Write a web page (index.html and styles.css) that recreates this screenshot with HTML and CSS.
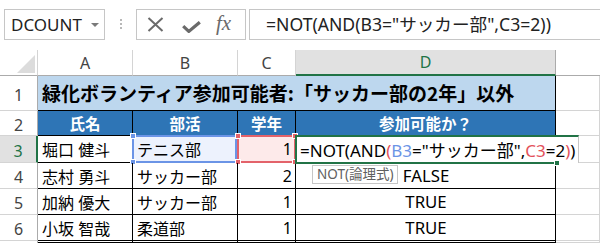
FILE: index.html
```html
<!DOCTYPE html>
<html lang="ja">
<head>
<meta charset="utf-8">
<link rel="stylesheet" href="styles.css">
</head>
<body>
<div class="toolbar">
  <div class="namebox"><span>DCOUNT</span><span class="caret"></span></div>
  <div class="grip"><i></i><i></i><i></i></div>
  <div class="fxbox">
    <svg class="ic-x" width="17" height="15" viewBox="0 0 17 15"><path d="M1.5 1 L15.5 14 M15.5 1 L1.5 14" stroke="#6a6a6a" stroke-width="2" fill="none"/></svg>
    <svg class="ic-ck" width="19" height="12" viewBox="0 0 19 12"><path d="M1.2 5.2 L6.8 10.4 L17.8 1.2" stroke="#6a6a6a" stroke-width="3.2" fill="none"/></svg>
    <span class="fx">fx</span>
  </div>
  <div class="formula">=NOT(AND(B3="サッカー部",C3=2))</div>
</div>

<div class="sheet">
  <div class="corner"><svg width="38" height="26" viewBox="0 0 38 26"><polygon points="35,5 35,23 17,23" fill="#dcdcdc"/></svg></div>
  <div class="ch">A</div>
  <div class="ch">B</div>
  <div class="ch">C</div>
  <div class="ch ch-act">D</div>
  <div class="ch ch-end"></div>

  <div class="rh">1</div>
  <div class="title">緑化ボランティア参加可能者:「サッカー部の2年」以外</div>
  <div class="g"></div>

  <div class="rh">2</div>
  <div class="hd">氏名</div>
  <div class="hd">部活</div>
  <div class="hd">学年</div>
  <div class="hd">参加可能か？</div>
  <div class="g"></div>

  <div class="rh rh-act">3</div>
  <div class="c">堀口 健斗</div>
  <div class="c c-blue">テニス部<div class="ref ref-blue"><i class="hdl tl"></i><i class="hdl bl"></i></div></div>
  <div class="c c-red num">1<div class="ref ref-red"><i class="hdl tl"></i><i class="hdl tr"></i><i class="hdl bl"></i><i class="hdl br"></i></div></div>
  <div class="c c-edit"><div class="editor"><span class="etext">=NOT(AND<span class="pr">(</span><span class="rb">B3</span>="サッカー部",<span class="rr">C3</span>=2<span class="pr">)</span>)</span><div class="editbar"></div><i class="fill"></i></div></div>
  <div class="g"></div>

  <div class="rh">4</div>
  <div class="c">志村 勇斗</div>
  <div class="c">サッカー部</div>
  <div class="c num">2</div>
  <div class="c ctr bool">FALSE<span class="tip">NOT(論理式)</span></div>
  <div class="g"></div>

  <div class="rh">5</div>
  <div class="c">加納 優大</div>
  <div class="c">サッカー部</div>
  <div class="c num">1</div>
  <div class="c ctr bool">TRUE</div>
  <div class="g"></div>

  <div class="rh">6</div>
  <div class="c">小坂 智哉</div>
  <div class="c">柔道部</div>
  <div class="c num">1</div>
  <div class="c ctr bool">TRUE</div>
  <div class="g"></div>

  <div class="rh"></div>
  <div class="c"></div>
  <div class="c"></div>
  <div class="c"></div>
  <div class="c"></div>
  <div class="g"></div>
</div>
</body>
</html>
```

FILE: styles.css
```css
* { box-sizing: border-box; }

body {
  margin: 0;
  width: 600px;
  height: 243px;
  overflow: hidden;
  background: #fff;
  font-family: "Noto Sans", "Noto Sans CJK JP", sans-serif;
  color: #000;
}

/* formula bar */
.toolbar {
  height: 50px;
  display: flex;
  align-items: flex-start;
  padding: 9px 0 0 4px;
}

.namebox {
  width: 101px;
  height: 31px;
  border: 1px solid #c6c6c6;
  display: flex;
  align-items: center;
  justify-content: space-between;
  padding: 0 5px 0 6px;
  font-size: 17px;
  color: #222;
}

.caret {
  width: 0;
  height: 0;
  border-left: 4px solid transparent;
  border-right: 4px solid transparent;
  border-top: 4px solid #7a7a7a;
}

.grip {
  width: 31px;
  display: flex;
  flex-direction: column;
  align-items: center;
  padding-top: 10px;
  gap: 2px;
}
.grip i {
  display: block;
  width: 2px;
  height: 2px;
  background: #b8b8b8;
}

.fxbox {
  width: 110px;
  height: 31px;
  border: 1px solid #c6c6c6;
  display: flex;
  align-items: center;
}
.ic-x { margin-left: 10px; }
.ic-ck { margin-left: 18px; margin-top: 4px; }
.fx {
  margin-left: 15px;
  font-family: "Liberation Serif", serif;
  font-style: italic;
  font-size: 21px;
  color: #6a6a6a;
  line-height: 1;
  margin-top: -2px;
}

.formula {
  flex: 1;
  margin-left: 3px;
  height: 31px;
  border: 1px solid #c6c6c6;
  border-right: none;
  padding-left: 16px;
  font-size: 17.6px;
  line-height: 28px;
  color: #222;
  white-space: nowrap;
}

/* sheet */
.sheet {
  display: grid;
  grid-template-columns: 38px 95px 105px 58px 260px 44px;
  grid-template-rows: 26px 35px 25px 27px 26px 26px 26px 2px;
  height: 193px;
  overflow: hidden;
}

.corner {
  border-right: 1px solid #d4d4d4;
  border-bottom: 1px solid #ababab;
}
.corner svg { display: block; }

.ch {
  border-right: 1px solid #d4d4d4;
  border-bottom: 1px solid #ababab;
  display: flex;
  align-items: center;
  justify-content: center;
  font-size: 16px;
  color: #444;
}
.ch-act {
  background: #e1e1e1;
  color: #217346;
  border-bottom: 2px solid #217346;
  border-right-color: #ababab;
}
.ch-end { border-right: none; }

.rh {
  border-right: 1px solid #ababab;
  border-bottom: 1px solid #d4d4d4;
  display: flex;
  align-items: center;
  justify-content: center;
  font-size: 16px;
  color: #444;
  padding-top: 3px;
}
.rh-act {
  background: #e1e1e1;
  color: #217346;
  border-right: 2px solid #217346;
}

.g {
  border-right: 1px solid #d4d4d4;
  border-bottom: 1px solid #d4d4d4;
}

.title {
  grid-column: 2 / span 4;
  background: #bdd7ee;
  border-right: 1px solid #000;
  border-bottom: 1px solid #000;
  font-family: "Noto Sans CJK JP", sans-serif;
  font-weight: bold;
  font-size: 19px;
  display: flex;
  align-items: center;
  padding: 0 0 2px 4px;
  white-space: nowrap;
}

.hd {
  background: #2e75b6;
  color: #fff;
  font-weight: bold;
  font-size: 15.5px;
  border-right: 1px solid #000;
  border-bottom: 1px solid #000;
  display: flex;
  align-items: center;
  justify-content: center;
  font-family: "Noto Sans CJK JP", sans-serif;
}

.c {
  position: relative;
  border-right: 1px solid #000;
  border-bottom: 1px solid #000;
  font-size: 16px;
  display: flex;
  align-items: center;
  padding: 0 3px 0 4px;
  white-space: nowrap;
}
.num { justify-content: flex-end; }
.ctr { justify-content: center; }
.bool { font-size: 16.8px; }

.c-blue { background: #edf2fd; }
.c-red { background: #fdeaea; }

.ref {
  position: absolute;
  left: -1px;
  top: -1px;
  right: -1px;
  bottom: -1px;
  border: 2px solid;
}
.ref-blue { border-color: #6b94e6; right: 0; }
.ref-red { border-color: #e3626a; }

.hdl {
  position: absolute;
  width: 6px;
  height: 6px;
  border: 1px solid #fff;
}
.ref-blue .hdl { background: #6b94e6; }
.ref-red .hdl { background: #e3626a; }
.tl { left: -4px; top: -4px; }
.tr { right: -4px; top: -4px; }
.bl { left: -4px; bottom: -4px; }
.br { right: -4px; bottom: -4px; }

.c-edit { padding: 0; }
.editor {
  position: absolute;
  left: -1px;
  top: -1px;
  width: 284px;
  height: 28px;
  background: #fff;
  border-left: 2px solid #217346;
  border-top: 2px solid #217346;
  border-right: 1px solid #c6c6c6;
  font-size: 17px;
  display: flex;
  align-items: center;
  padding: 0 0 1px 3px;
  white-space: nowrap;
  z-index: 2;
}
.etext { white-space: nowrap; }
.editbar {
  position: absolute;
  left: -2px;
  bottom: -1px;
  width: 263px;
  height: 2px;
  background: #217346;
}
.fill {
  position: absolute;
  left: 257px;
  bottom: -3px;
  width: 6px;
  height: 6px;
  background: #217346;
  border: 1px solid #fff;
}
.rb { color: #6b94e6; }
.rr { color: #e3525b; }
.pr { color: #e3525b; }

.tip {
  position: absolute;
  left: 16px;
  top: 2px;
  height: 19px;
  border: 1px solid #c6c6c6;
  background: #fff;
  font-family: "Noto Sans", "Noto Sans CJK JP", sans-serif;
  font-size: 13.5px;
  line-height: 17px;
  color: #606060;
  padding: 0 3px 0 4px;
  z-index: 3;
}
```
